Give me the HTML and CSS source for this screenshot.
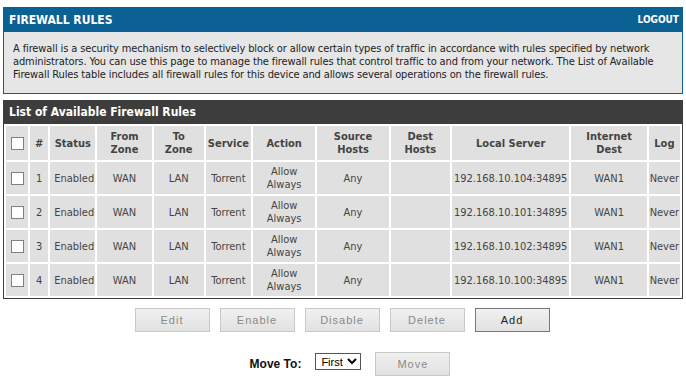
FILE: index.html
```html
<!DOCTYPE html>
<html>
<head>
  <meta charset="utf-8">
  <title>Firewall Rules</title>
  <link rel="stylesheet" href="styles.css">
</head>
<body>
  <div class="page">
    <div class="topbar">
      <span class="topbar-title">FIREWALL RULES</span>
      <a class="logout" href="#">LOGOUT</a>
    </div>
    <div class="intro">
      A firewall is a security mechanism to selectively block or allow certain types of traffic in accordance with rules specified by network
      administrators. You can use this page to manage the firewall rules that control traffic to and from your network. The List of Available
      Firewall Rules table includes all firewall rules for this device and allows several operations on the firewall rules.
    </div>

    <div class="list-title">List of Available Firewall Rules</div>
    <table class="rules">
      <thead>
        <tr>
          <th class="c-chk"><input type="checkbox"></th>
          <th class="c-num">#</th>
          <th class="c-status">Status</th>
          <th class="c-from">From<br>Zone</th>
          <th class="c-to">To<br>Zone</th>
          <th class="c-service">Service</th>
          <th class="c-action">Action</th>
          <th class="c-src">Source<br>Hosts</th>
          <th class="c-dst">Dest<br>Hosts</th>
          <th class="c-local">Local Server</th>
          <th class="c-inet">Internet<br>Dest</th>
          <th class="c-log">Log</th>
        </tr>
      </thead>
      <tbody>
        <tr>
          <td><input type="checkbox"></td>
          <td>1</td>
          <td class="left">Enabled</td>
          <td>WAN</td>
          <td>LAN</td>
          <td>Torrent</td>
          <td>Allow<br>Always</td>
          <td>Any</td>
          <td></td>
          <td>192.168.10.104:34895</td>
          <td>WAN1</td>
          <td>Never</td>
        </tr>
        <tr>
          <td><input type="checkbox"></td>
          <td>2</td>
          <td class="left">Enabled</td>
          <td>WAN</td>
          <td>LAN</td>
          <td>Torrent</td>
          <td>Allow<br>Always</td>
          <td>Any</td>
          <td></td>
          <td>192.168.10.101:34895</td>
          <td>WAN1</td>
          <td>Never</td>
        </tr>
        <tr>
          <td><input type="checkbox"></td>
          <td>3</td>
          <td class="left">Enabled</td>
          <td>WAN</td>
          <td>LAN</td>
          <td>Torrent</td>
          <td>Allow<br>Always</td>
          <td>Any</td>
          <td></td>
          <td>192.168.10.102:34895</td>
          <td>WAN1</td>
          <td>Never</td>
        </tr>
        <tr>
          <td><input type="checkbox"></td>
          <td>4</td>
          <td class="left">Enabled</td>
          <td>WAN</td>
          <td>LAN</td>
          <td>Torrent</td>
          <td>Allow<br>Always</td>
          <td>Any</td>
          <td></td>
          <td>192.168.10.100:34895</td>
          <td>WAN1</td>
          <td>Never</td>
        </tr>
      </tbody>
    </table>

    <div class="actions">
      <button class="btn" disabled>Edit</button>
      <button class="btn" disabled>Enable</button>
      <button class="btn" disabled>Disable</button>
      <button class="btn" disabled>Delete</button>
      <button class="btn btn-on">Add</button>
    </div>

    <div class="move">
      <span class="move-label">Move To:</span>
      <select class="move-select">
        <option>First</option>
        <option>Last</option>
      </select>
      <button class="btn" disabled>Move</button>
    </div>
  </div>
</body>
</html>
```

FILE: styles.css
```css
body {
  margin: 0;
  background: #fff;
  font-family: "DejaVu Sans Condensed", "DejaVu Sans", sans-serif;
  font-size: 11px;
  color: #333;
}

.page {
  margin: 7px 3px 0 3px;
}

/* blue title bar */
.topbar {
  height: 25px;
  background: #0b6094;
  display: flex;
  align-items: center;
  justify-content: space-between;
  padding: 0 4px 0 6px;
}

.topbar-title {
  color: #fff;
  font-weight: bold;
  font-size: 12px;
}

.logout {
  color: #fff;
  font-weight: bold;
  font-size: 10px;
  text-decoration: none;
}

.intro {
  background: #e6e6e6;
  border: 1px solid #0b6094;
  border-top: 0;
  padding: 10px 9px 12px 9px;
  line-height: 13px;
  letter-spacing: -0.12px;
  color: #222;
}

/* dark list header */
.list-title {
  margin-top: 6px;
  height: 24px;
  line-height: 24px;
  background: #3d3d3d;
  color: #fff;
  font-weight: bold;
  font-size: 12px;
  padding-left: 6px;
}

.rules {
  width: 100%;
  table-layout: fixed;
  border: 1px solid #3d3d3d;
  border-top: 0;
  border-spacing: 2px;
  background: #fff;
}

.rules th,
.rules td {
  background: #e0e0e0;
  text-align: center;
  padding: 0;
  line-height: 13px;
}

.rules th {
  height: 34px;
  font-weight: bold;
  color: #444;
}

.rules td {
  height: 32px;
  color: #444;
}

.rules td.left {
  text-align: left;
  padding-left: 4px;
}

.c-chk { width: 22px; }
.c-num { width: 18px; }
.c-status { width: 45px; }
.c-from { width: 54px; }
.c-to { width: 50px; }
.c-service { width: 45px; }
.c-action { width: 62px; }
.c-src { width: 71px; }
.c-dst { width: 59px; }
.c-local { width: 117px; }
.c-inet { width: 75px; }
.c-log { width: 31px; }

.rules input[type="checkbox"] {
  -webkit-appearance: none;
  appearance: none;
  width: 13px;
  height: 13px;
  margin: 0;
  border: 1px solid #808080;
  background: #fff;
  vertical-align: middle;
}

/* buttons */
.actions {
  display: flex;
  justify-content: center;
  gap: 10px;
  margin-top: 9px;
  padding-right: 2px;
}

.btn {
  width: 75px;
  height: 24px;
  border: 1px solid #c9c9c9;
  background: linear-gradient(#f0f0f0, #e2e2e2);
  color: #8a8a8a;
  font-family: "Liberation Sans", Arial, sans-serif;
  font-size: 11px;
  letter-spacing: 1px;
  padding: 0;
}

.btn-on {
  border-color: #777;
  color: #222;
}

.move {
  display: flex;
  justify-content: center;
  align-items: flex-start;
  margin-top: 20px;
  padding-left: 14px;
}

.move-label {
  font-family: "Liberation Sans", Arial, sans-serif;
  font-weight: bold;
  font-size: 12px;
  line-height: 24px;
  color: #111;
  margin-right: 14px;
}

.move-select {
  width: 46px;
  height: 17px;
  margin-top: 1px;
  font-family: "Liberation Sans", Arial, sans-serif;
  font-size: 11px;
  border: 1px solid #555;
  background: #fff;
  padding: 0 1px;
  margin-right: 14px;
}
```
